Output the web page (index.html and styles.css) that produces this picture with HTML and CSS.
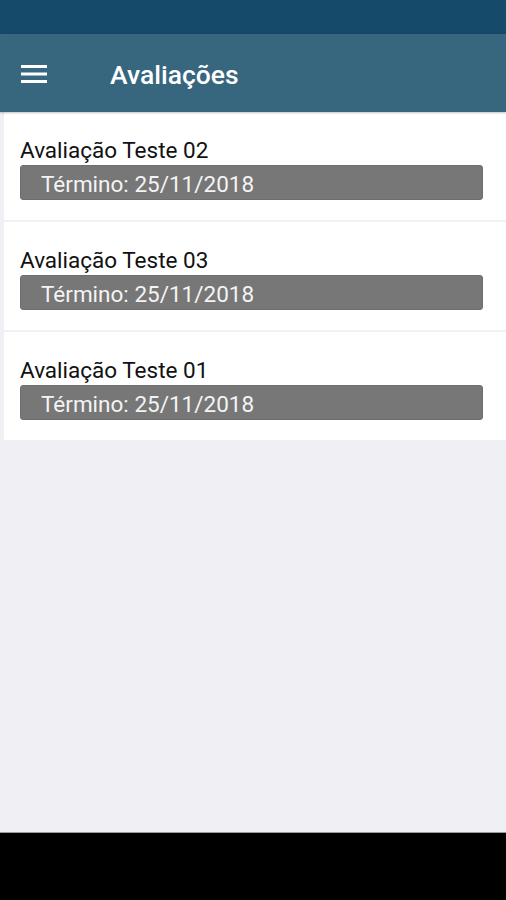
FILE: index.html
```html
<!DOCTYPE html>
<html lang="pt">
<head>
<meta charset="utf-8">
<link rel="stylesheet" href="styles.css">
</head>
<body>
<div class="screen">
  <div class="status-bar"></div>
  <header class="app-bar">
    <svg class="menu" width="26" height="20" viewBox="0 0 26 20">
      <rect x="0" y="1" width="26" height="3" fill="#fff"/>
      <rect x="0" y="8.5" width="26" height="3" fill="#fff"/>
      <rect x="0" y="16" width="26" height="3" fill="#fff"/>
    </svg>
    <h1 class="title">Avaliações</h1>
  </header>
  <main class="content">
    <ul class="list">
      <li class="item">
        <div class="item-title">Avaliação Teste 02</div>
        <div class="badge">Término: 25/11/2018</div>
      </li>
      <li class="item">
        <div class="item-title">Avaliação Teste 03</div>
        <div class="badge">Término: 25/11/2018</div>
      </li>
      <li class="item">
        <div class="item-title">Avaliação Teste 01</div>
        <div class="badge">Término: 25/11/2018</div>
      </li>
    </ul>
  </main>
  <div class="nav-bar"></div>
</div>
</body>
</html>
```
FILE: styles.css
```css
* { box-sizing: border-box; }
html, body {
  margin: 0;
  padding: 0;
}
body {
  background: #efeff4;
  font-family: Roboto, "Noto Sans", sans-serif;
}
.screen {
  height: 900px;
  display: flex;
  flex-direction: column;
}
.status-bar {
  height: 34px;
  background: #164a6a;
  flex: none;
}
.app-bar {
  height: 78px;
  background: #37667f;
  display: flex;
  align-items: center;
  flex: none;
  box-shadow: 0 1px 2px rgba(0,0,0,0.25);
  position: relative;
  z-index: 1;
}
.menu {
  margin-left: 21px;
  margin-top: 2px;
}
.title {
  margin: 3px 0 0 63px;
  color: #fff;
  font-size: 26.5px;
  line-height: 30px;
  font-weight: 500;
}
.content {
  flex: 1;
  padding-left: 4px;
}
.list {
  list-style: none;
  margin: 0;
  padding: 0;
  background: #fff;
}
.item {
  height: 110px;
  padding: 25px 23px 0 16px;
  border-bottom: 2px solid #f1f1f4;
}
.item:last-child {
  height: 108px;
  border-bottom: none;
}
.item-title {
  font-size: 22.5px;
  line-height: 26px;
  color: #111;
  margin-bottom: 2px;
}
.badge {
  height: 35px;
  padding-top: 1px;
  line-height: 34px;
  background: #777;
  border-radius: 3px;
  border: 1px solid #6e6e6e;
  color: #f4f4f4;
  font-size: 22.5px;
  padding-left: 20px;
}
.nav-bar {
  height: 68px;
  flex: none;
  background: #000;
  border-top: 1px solid #9a9a9a;
}
```
